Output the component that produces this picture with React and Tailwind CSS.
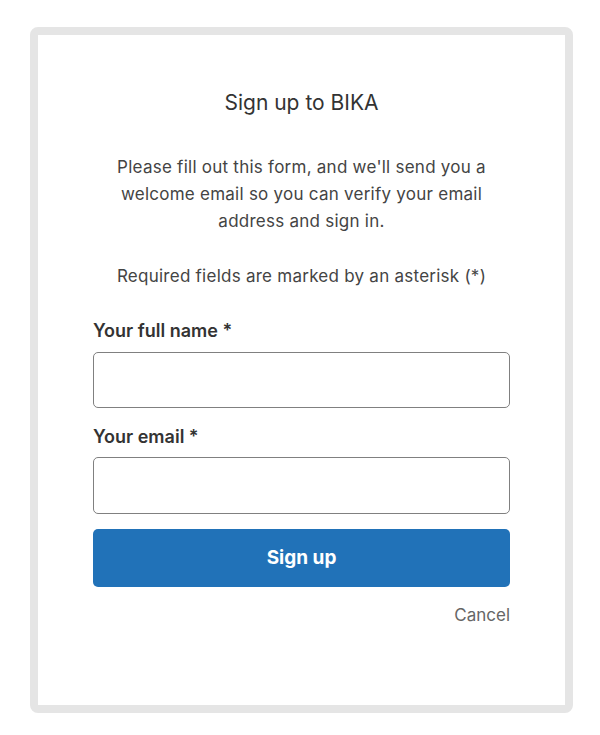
import React from "react";

export default function App() {
  return (
    <div className="min-h-[735px] w-[600px] bg-white pt-[27px] pl-[30px]" style={{ fontFamily: "Inter, 'Noto Sans', sans-serif" }}>
      <div className="flex h-[686px] w-[543px] flex-col rounded-[8px] border-[8px] border-[#e5e5e5] bg-white px-[55px]">
        <h1 className="mt-[54px] text-center text-[21px] leading-[28px] font-normal text-[#333333]">Sign up to BIKA</h1>
        <p className="mx-auto mt-[37px] w-[400px] text-center text-[17px] leading-[27px] tracking-[0.25px] text-[#444444]">
          Please fill out this form, and we'll send you a welcome email so you can verify your email address and sign in.
        </p>
        <p className="mt-[28px] text-center text-[17px] leading-[27px] tracking-[0.25px] text-[#444444]">
          Required fields are marked by an asterisk (*)
        </p>
        <label className="mt-[29px] block text-[18px] leading-[24px] font-semibold text-[#333333]">Your full name *</label>
        <input type="text" className="mt-[9px] h-[56px] w-full rounded-[5px] border border-[#808080] bg-white px-3 outline-none" />
        <label className="mt-[17px] block text-[18px] leading-[24px] font-semibold text-[#333333]">Your email *</label>
        <input type="email" className="mt-[8px] h-[57px] w-full rounded-[5px] border border-[#808080] bg-white px-3 outline-none" />
        <button className="mt-[15px] h-[58px] w-full rounded-[5px] bg-[#2172b8] text-[19px] font-bold text-white">Sign up</button>
        <div className="mt-[16px] text-right text-[17px] leading-[24px] text-[#666666]">Cancel</div>
      </div>
    </div>
  );
}
